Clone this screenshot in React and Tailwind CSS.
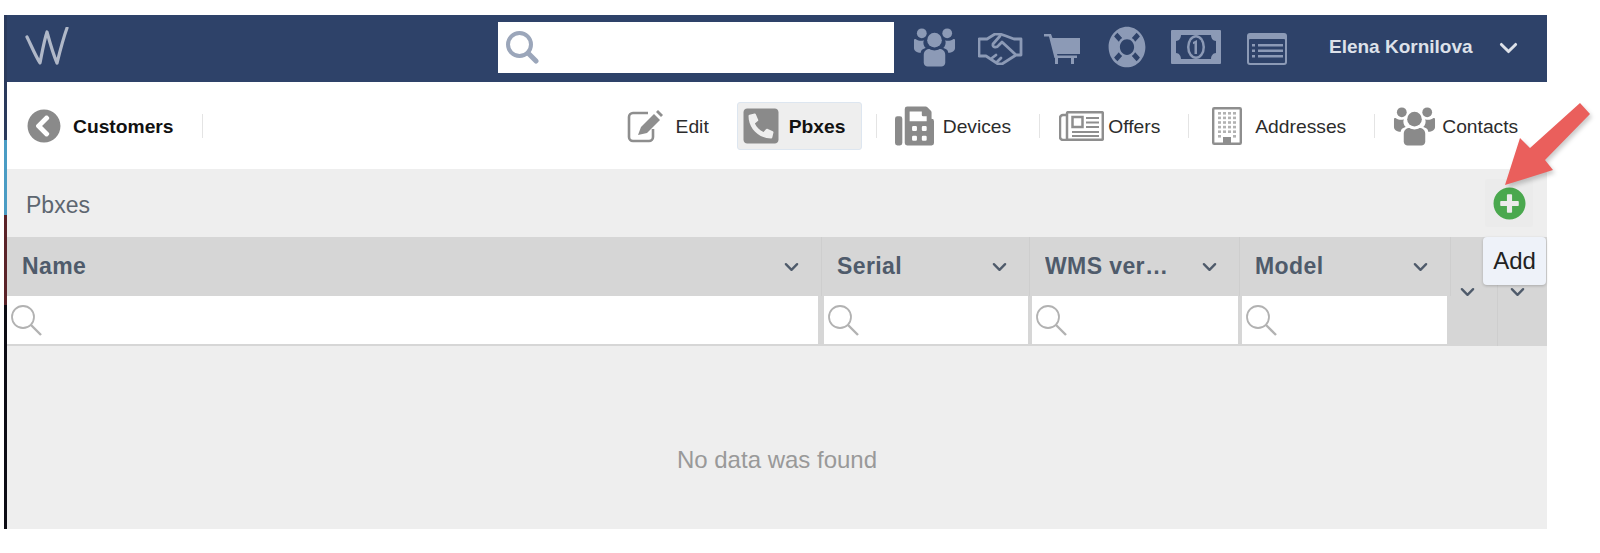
import { FaLifeRing, FaPhoneSquare, FaFax, FaChevronCircleLeft, FaPlusCircle } from "react-icons/fa";

function Group({ className }) {
  return (
    <svg viewBox="0 0 44 40" className={className} fill="currentColor">
      <circle cx="9" cy="6" r="5" />
      <circle cx="35" cy="6" r="5" />
      <circle cx="22" cy="13" r="7.5" />
      <path d="M1 13c0-1 1-1.500 2-1 3 2 6 2 8 1-1 3 0 6 2 8-4 1-5 3-5 5-4 0-7-2-7-5z" />
      <path d="M43 13c0-1-1-1.500-2-1-3 2-6 2-8 1 1 3 0 6-2 8 4 1 5 3 5 5 4 0 7-2 7-5z" />
      <path d="M11 28c0-4 3-6 6-6 3 2 7 2 10 0 3 0 6 2 6 6v8c0 2-2 4-4 4H15c-2 0-4-2-4-4z" />
    </svg>
  );
}

function Handshake({ className }) {
  return (
    <svg viewBox="0 0 45 32" className={className} fill="none" stroke="currentColor" strokeWidth="2.800" strokeLinejoin="round" strokeLinecap="round">
      <path d="M1 6h8l8-5h5l6 2 8 3h7v16h-5l-14 9h-4L8 23H1z" />
      <path d="M22 3l-7 8c-1 4 4 4 6 1l3-3 13 12" />
      <path d="M14 25l4-3M19 29l4-4" />
    </svg>
  );
}

function Cart({ className }) {
  return (
    <svg viewBox="0 0 36 30" className={className} fill="currentColor">
      <path d="M0 0h7l1.500 4H36v16H13l.5 1.500H33V24h-3v6h-3v-6H14v6h-3v-6h-.5L5 2.500H0z" />
    </svg>
  );
}

function Money({ className }) {
  return (
    <svg viewBox="0 0 50 34" className={className}>
      <rect width="50" height="34" fill="currentColor" rx="1" />
      <path d="M10 5h30c0 3 2 6 5 6v12c-3 0-5 3-5 6H10c0-3-2-6-5-6V11c3 0 5-3 5-6z" fill="#2e4269" />
      <ellipse cx="25" cy="17" rx="9" ry="12" fill="currentColor" />
      <ellipse cx="25" cy="17" rx="6.500" ry="9.500" fill="#2e4269" />
      <path d="M22 12l4-2v14h-2.500V13.500l-1.500.8z" fill="currentColor" />
    </svg>
  );
}

function ListBox({ className }) {
  return (
    <svg viewBox="0 0 40 32" className={className}>
      <rect width="40" height="32" rx="3" fill="currentColor" />
      <rect x="2" y="6" width="36" height="24" rx="1" fill="#2e4269" />
      <path d="M5 11h3v2.500H5zM11 11h25v2.500H11zM5 16.500h3V19H5zM11 16.500h25V19H11zM5 22h3v2.500H5zM11 22h25v2.500H11z" fill="currentColor" />
    </svg>
  );
}

function EditIcon({ className }) {
  return (
    <svg viewBox="0 0 38 34" className={className}>
      <path d="M22 4H7a4 4 0 0 0-4 4v20a4 4 0 0 0 4 4h16a4 4 0 0 0 4-4v-8" fill="none" stroke="currentColor" strokeWidth="2.600" />
      <path d="M12 26l3-8 13-13 6 6-13 13z" fill="currentColor" />
      <path d="M30 3l2-2 5 5-2 2z" fill="currentColor" />
    </svg>
  );
}

function Newspaper({ className }) {
  return (
    <svg viewBox="0 0 45 30" className={className} fill="none" stroke="currentColor">
      <path d="M8 4H4a3 3 0 0 0-3 3v19a3 3 0 0 0 3 3h4" strokeWidth="2.500" />
      <rect x="8" y="1.200" width="35.800" height="27.600" rx="1" strokeWidth="2.500" />
      <rect x="13.500" y="6" width="10" height="10" strokeWidth="2.500" />
      <path d="M27 7h13M27 11.500h13M27 16h13M13 21h27M13 25h27" strokeWidth="2.200" />
    </svg>
  );
}

function Building({ className }) {
  const dots = [];
  for (let row = 0; row < 6; row++) {
    for (let col = 0; col < 4; col++) {
      if (row === 5 && (col === 1 || col === 2)) continue;
      dots.push(<rect key={`${row}-${col}`} x={6 + col * 5} y={5 + row * 4.6} width="3" height="2.600" fill="#b2b2b2" />);
    }
  }
  return (
    <svg viewBox="0 0 30 38" className={className}>
      <rect x="1.200" y="1.200" width="27.600" height="35.600" rx="1" fill="#fff" stroke="#8e8e8e" strokeWidth="2.400" />
      {dots}
      <rect x="11" y="30" width="8" height="6" fill="#8e8e8e" />
    </svg>
  );
}

function Chevron({ className }) {
  return (
    <svg viewBox="0 0 16 10" className={className} fill="none" stroke="currentColor" strokeWidth="2.500" strokeLinecap="round" strokeLinejoin="round">
      <path d="M2 2l6 6 6-6" />
    </svg>
  );
}

function Magnifier() {
  return (
    <svg viewBox="0 0 32 32" className="h-8 w-8 text-[#b2b2b2]" fill="none" stroke="currentColor">
      <circle cx="13" cy="13" r="11" strokeWidth="1.800" />
      <path d="M21 21l10 10" strokeWidth="2.400" />
    </svg>
  );
}

function Sep({ className = "" }) {
  return <div className={`h-[24px] w-px bg-[#e4e4e4] ${className}`} />;
}

function Column({ name, className, cell }) {
  return (
    <div className={`flex flex-col ${className}`}>
      <div className="flex h-[59px] items-center justify-between border-r border-[#cecece] pr-[22px] pl-[15px]">
        <span className="truncate text-[23px] font-bold tracking-[0.4px] text-[#4f5b6b]">{name}</span>
        <Chevron className="h-[10px] w-[15px] shrink-0 text-[#4f5b6b]" />
      </div>
      <div className={`flex h-[48px] items-center bg-white pl-[3px] ${cell}`}>
        <Magnifier />
      </div>
      <div className="h-[2px]" />
    </div>
  );
}

export default function App() {
  return (
    <div className="relative h-[553px] w-[1600px] overflow-hidden bg-white font-['Liberation_Sans',Arial,sans-serif]">
      <div className="flex pt-[15px] pl-[4px]">
        <div className="flex w-[3px] flex-col">
          <div className="h-[125px] bg-[#2a3a5c]" />
          <div className="h-[75px] bg-[#4a9cc4]" />
          <div className="h-[90px] bg-[#5a2228]" />
          <div className="h-[224px] bg-[#0c0c14]" />
        </div>
        <div className="w-[1540px]">
          <header className="flex h-[67px] items-center bg-[#2e4269] text-[#8c9ab6]">
            <svg viewBox="0 0 44 40" className="mb-[3px] ml-[18px] h-[40px] w-[44px] shrink-0 text-[#b0b8c8]" fill="none" stroke="currentColor" strokeWidth="3.200" strokeLinecap="round" strokeLinejoin="round">
              <path d="M2 10c4 8 8 18 13 26 2-10 4-22 7-31 3 11 6 22 10 31 3-12 6-24 10-35" />
            </svg>
            <div className="mb-[3px] ml-[429px] flex h-[51px] w-[396px] items-center bg-white pl-[7px]">
              <svg viewBox="0 0 34 34" className="h-[34px] w-[34px] text-[#9ba6ba]" fill="none" stroke="currentColor">
                <circle cx="14.500" cy="14.500" r="11.500" strokeWidth="4" />
                <path d="M23 23l8 8" strokeWidth="5" strokeLinecap="round" />
              </svg>
            </div>
            <Group className="mb-[3px] ml-[19px] h-[40px] w-[43px] shrink-0" />
            <Handshake className="ml-[22px] h-[32px] w-[45px] shrink-0" />
            <Cart className="ml-[21px] h-[30px] w-[36px] shrink-0" />
            <FaLifeRing preserveAspectRatio="none" className="mb-[3px] ml-[28px] h-[42px] w-[38px] shrink-0" />
            <Money className="mb-[4px] ml-[25px] h-[34px] w-[50px] shrink-0" />
            <ListBox className="ml-[26px] h-[32px] w-[40px] shrink-0" />
            <span className="mb-[2px] ml-[42px] text-[19px] font-bold whitespace-nowrap text-[#dde1e9]">Elena Kornilova</span>
            <Chevron className="mb-[2px] ml-[26px] h-[12px] w-[19px] shrink-0 text-[#dde1e9]" />
          </header>

          <nav className="flex h-[87px] items-center bg-white text-[19.250px] text-[#2c2c2c]">
            <FaChevronCircleLeft className="ml-[20px] h-[34px] w-[34px] shrink-0 text-[#8a8a8a]" />
            <span className="ml-[12px] pt-[4px] font-bold text-[#111]">Customers</span>
            <Sep className="ml-[28px]" />
            <EditIcon className="ml-[423px] h-[34px] w-[38px] shrink-0 text-[#8e8e8e]" />
            <span className="ml-[12px] pt-[4px]">Edit</span>
            <div className="ml-[28px] flex h-[48px] w-[125px] items-center rounded-[3px] border border-[#dde6f0] bg-[#eeeeee] pl-[4px]">
              <FaPhoneSquare className="h-[40px] w-[38px] shrink-0 -scale-x-100 text-[#8a8a8a]" />
              <span className="ml-[9px] pt-[4px] font-bold text-[#111]">Pbxes</span>
            </div>
            <Sep className="ml-[14px]" />
            <FaFax className="ml-[18px] h-[40px] w-[39px] shrink-0 text-[#8a8a8a]" />
            <span className="ml-[9px] pt-[4px]">Devices</span>
            <Sep className="ml-[28px]" />
            <Newspaper className="ml-[19px] h-[30px] w-[45px] shrink-0 text-[#8e8e8e]" />
            <span className="ml-[4px] pt-[4px]">Offers</span>
            <Sep className="ml-[28px]" />
            <Building className="ml-[23px] h-[38px] w-[30px] shrink-0" />
            <span className="ml-[13px] pt-[4px]">Addresses</span>
            <Sep className="ml-[28px]" />
            <Group className="ml-[18px] h-[40px] w-[43px] shrink-0 text-[#8a8a8a]" />
            <span className="ml-[6px] pt-[4px]">Contacts</span>
          </nav>

          <div className="flex h-[68px] items-center justify-between bg-[#eeeeee] pr-[14px] pl-[19px]">
            <span className="pt-[4px] text-[23px] text-[#5d6670]">Pbxes</span>
            <button className="flex h-[48px] w-[48px] items-center justify-center rounded-[2px] bg-[#ebebeb]">
              <FaPlusCircle className="h-[33px] w-[33px] text-[#4aa84e]" />
            </button>
          </div>

          <div className="flex bg-[#d6d6d6]">
            <Column name="Name" className="w-[815px]" cell="mr-[4px]" />
            <Column name="Serial" className="w-[208px]" cell="mr-[2px] ml-[2px]" />
            <Column name="WMS ver…" className="w-[210px]" cell="mr-[2px] ml-[2px]" />
            <Column name="Model" className="w-[211px]" cell="mr-[4px] ml-[2px]" />
            <div className="flex w-[47px] items-center justify-center border-r border-[#cecece] pr-[14px]">
              <Chevron className="h-[10px] w-[15px] text-[#4f5b6b]" />
            </div>
            <div className="flex w-[49px] items-center justify-center pr-[10px]">
              <Chevron className="h-[10px] w-[15px] text-[#4f5b6b]" />
            </div>
          </div>

          <div className="flex h-[183px] items-center justify-center bg-[#eeeeee] pt-[44px] text-[24px] text-[#999999]">
            No data was found
          </div>
        </div>
      </div>

      <svg viewBox="0 0 100 100" className="absolute top-[100px] left-[1498px] h-[100px] w-[100px] drop-shadow-[2px_3px_2px_rgba(0,0,0,0.2)]">
        <path d="M7 85L22 38 32 48 82 3 92 14 47 60 55 70z" fill="#ea5f5c" />
      </svg>

      <div className="absolute top-[237px] left-[1483px] flex h-[48px] w-[63px] items-center justify-center rounded-[4px] bg-[#eef2f9] text-[24px] text-[#222] shadow-[0_1px_3px_rgba(0,0,0,0.2)]">
        Add
      </div>
    </div>
  );
}
